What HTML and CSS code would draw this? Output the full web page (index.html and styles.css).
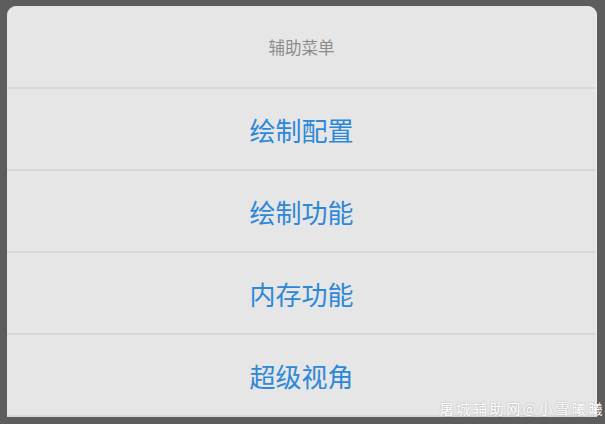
FILE: index.html
```html
<!DOCTYPE html>
<html>
  <head>
    <meta charset="utf-8">
    <title>辅助菜单</title>
    <link rel="stylesheet" href="styles.css">
  </head>
  <body>
    <div class="dialog">
      <div class="dialog-title">辅助菜单</div>
      <ul class="menu">
        <li class="menu-item">绘制配置</li>
        <li class="menu-item">绘制功能</li>
        <li class="menu-item">内存功能</li>
        <li class="menu-item">超级视角</li>
      </ul>
    </div>

    <!-- site watermark -->
    <div class="watermark">屠城辅助网@小雪曦曦</div>
  </body>
</html>
```

FILE: styles.css
```css
html,
body {
  height: 100%;
}

body {
  margin: 0;
  background-color: #5d5d5d; /* dimmed backdrop behind the dialog */
  font-family: "Noto Sans CJK SC", "Noto Sans", sans-serif;
  overflow: hidden;
  position: relative;
}

.dialog {
  margin: 6px 9px 0 7px;
  background-color: #e6e6e6;
  border-radius: 9px 9px 0 0;
  box-shadow: 1px 0 0 #eeeeee;
}

.dialog-title {
  height: 81px;
  display: flex;
  align-items: center;
  justify-content: center;
  font-size: 16.5px;
  color: #8c8c8c;
  border-bottom: 2px solid #d8d8d8;
}

.menu {
  list-style: none;
  margin: 0;
  padding: 0;
}

.menu-item {
  height: 80px;
  display: flex;
  align-items: center;
  justify-content: center;
  font-size: 26px;
  color: #2e88d8;
  border-bottom: 2px solid #d8d8d8;
}

.watermark {
  position: absolute;
  right: 0;
  bottom: 6px;
  font-size: 14px;
  color: #ffffff;
  letter-spacing: 2.6px;
  text-shadow: 0 0 2px rgba(0, 0, 0, 0.3);
}
```
